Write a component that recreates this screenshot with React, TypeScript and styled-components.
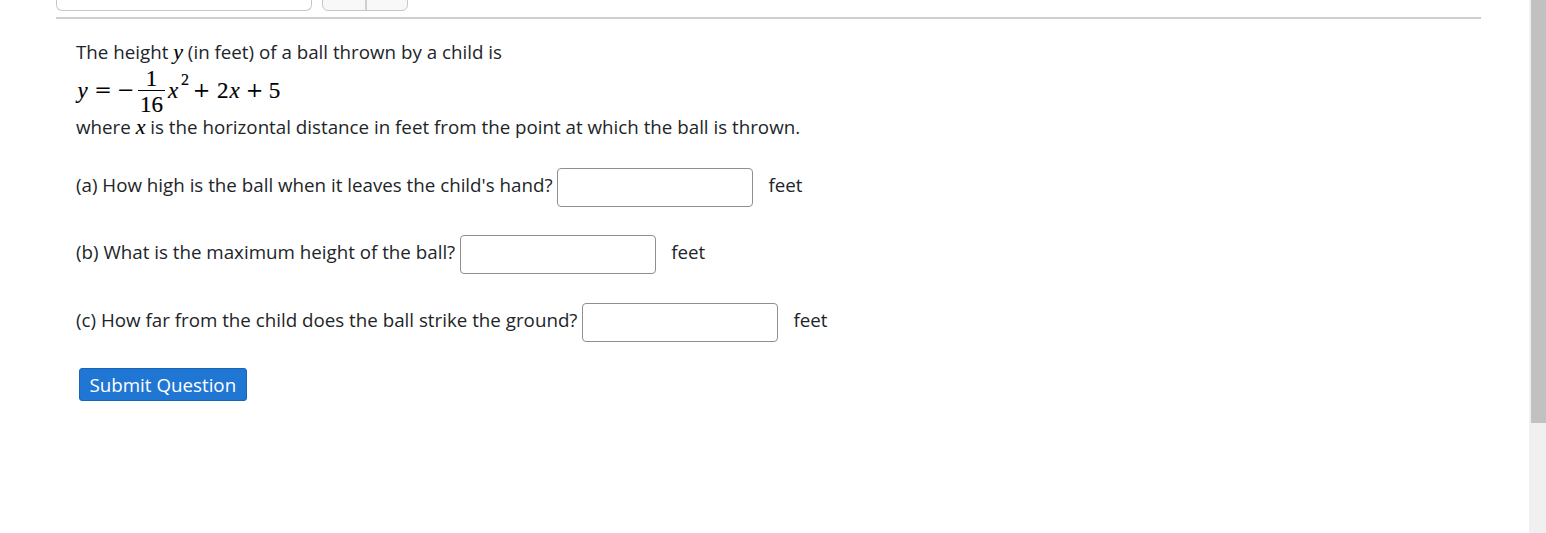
import React from "react";
import styled, { createGlobalStyle } from "styled-components";

const GlobalStyle = createGlobalStyle`
  html, body {
    margin: 0;
    padding: 0;
    background: #ffffff;
    overflow: hidden;
  }
  body {
    font-family: "Open Sans", "Noto Sans", sans-serif;
    font-size: 18.75px;
    color: #212529;
  }
`;

const Screen = styled.div`
  display: flex;
  width: 1546px;
  height: 533px;
  overflow: hidden;
`;

const Main = styled.div`
  flex: 1;
  padding: 0 48px 0 56px;
`;

const Toolbar = styled.div`
  display: flex;
  align-items: flex-end;
  gap: 10px;
  margin-top: -25px;
  height: 36px;
  padding-bottom: 6px;
  border-bottom: 2px solid #cfcfcf;
`;

const SearchBox = styled.div`
  width: 256px;
  height: 36px;
  box-sizing: border-box;
  border: 1px solid #c8c8c8;
  border-radius: 0 0 6px 6px;
  border-top: none;
`;

const ButtonGroup = styled.div`
  display: flex;
  height: 36px;
  box-sizing: border-box;
  border: 1px solid #c8c8c8;
  border-radius: 0 0 6px 6px;
  background: #f8f8f8;
  overflow: hidden;
`;

const GroupButton = styled.div<{ $w: number; $divider?: boolean }>`
  width: ${(p) => p.$w}px;
  height: 100%;
  border-left: ${(p) => (p.$divider ? "2px solid #cfcfcf" : "none")};
`;

const Content = styled.div`
  padding: 19px 20px 0 20px;
`;

const Line = styled.div`
  line-height: 28px;
`;

const MathVar = styled.span`
  font-family: "Liberation Serif", "DejaVu Serif", serif;
  font-style: italic;
  font-size: 22px;
  color: #000;
  -webkit-text-stroke: 0.15px #000;
`;

/* display equation: items hang from the top so each one can sit on its own offset */
const Display = styled.div`
  display: flex;
  align-items: flex-start;
  height: 47px;
  font-family: "Liberation Serif", "DejaVu Serif", serif;
  font-size: 23px;
  line-height: 23px;
  color: #000;
  -webkit-text-stroke: 0.2px #000;
`;

const Term = styled.span<{ $italic?: boolean; $w: number; $l?: number }>`
  display: inline-block;
  width: ${(p) => p.$w}px;
  margin: 13px 0 0 ${(p) => p.$l ?? 0}px;
  text-align: center;
  font-style: ${(p) => (p.$italic ? "italic" : "normal")};
`;

const Op = styled(Term)`
  font-family: "DejaVu Serif", "Liberation Serif", serif;
  font-size: 21px;
  -webkit-text-stroke: 0;
`;

const Fraction = styled.span`
  display: inline-flex;
  flex-direction: column;
  align-items: center;
  margin: 1px 2px 0 7px;
`;

const Numer = styled.span`
  align-self: stretch;
  text-align: center;
  padding: 0 2px;
  border-bottom: 1px solid #000;
`;

const Denom = styled.span`
  padding: 0 2px;
  margin-top: 2px;
`;

const Sup = styled.span`
  display: inline-block;
  width: 8px;
  font-size: 16px;
  line-height: 16px;
  margin: 6px 0 0 2px;
`;

const Question = styled.div<{ $top: number }>`
  display: flex;
  align-items: center;
  margin-top: ${(p) => p.$top}px;
  height: 38px;
`;

const Label = styled.span`
  padding-bottom: 5px;
`;

const Answer = styled.input`
  width: 196px;
  height: 39px;
  box-sizing: border-box;
  margin-left: 5px;
  border: 1px solid #8f8f8f;
  border-radius: 4px;
  background: #fff;
`;

const Unit = styled(Label)`
  margin-left: 15px;
`;

const SubmitButton = styled.button`
  margin: 27px 0 0 3px;
  height: 33px;
  padding: 0 9.5px;
  border: 1px solid #1a64b8;
  border-radius: 3px;
  background: #1f76d3;
  color: #ffffff;
  font-family: "Open Sans", "Noto Sans", sans-serif;
  font-size: 18.75px;
`;

const Scrollbar = styled.div`
  width: 17px;
  background: #f0f0f0;
  display: flex;
  justify-content: flex-end;
`;

const Thumb = styled.div`
  width: 15px;
  height: 423px;
  background: #c1c1c1;
`;

const questions = [
  { label: "(a) How high is the ball when it leaves the child's hand?", top: 27 },
  { label: "(b) What is the maximum height of the ball?", top: 29 },
  { label: "(c) How far from the child does the ball strike the ground?", top: 30 },
];

export default function App() {
  return (
    <Screen>
      <GlobalStyle />
      <Main>
        <Toolbar>
          <SearchBox />
          <ButtonGroup>
            <GroupButton $w={42} />
            <GroupButton $w={40} $divider />
          </ButtonGroup>
        </Toolbar>
        <Content>
          <Line>
            The height <MathVar>y</MathVar> (in feet) of a ball thrown by a child is
          </Line>
          <Display>
            <Term $italic $w={13}>y</Term>
            <Op $w={28}>=</Op>
            <Op $w={14}>−</Op>
            <Fraction>
              <Numer>1</Numer>
              <Denom>16</Denom>
            </Fraction>
            <Term $italic $w={12}>x</Term>
            <Sup>2</Sup>
            <Op $w={25}>+</Op>
            <Term $w={11.5} $l={3}>2</Term>
            <Term $italic $w={12}>x</Term>
            <Op $w={28}>+</Op>
            <Term $w={12}>5</Term>
          </Display>
          <Line>
            where <MathVar>x</MathVar> is the horizontal distance in feet from the point at which the
            ball is thrown.
          </Line>
          {questions.map((q) => (
            <Question key={q.label} $top={q.top}>
              <Label>{q.label}</Label>
              <Answer type="text" />
              <Unit>feet</Unit>
            </Question>
          ))}
          <SubmitButton>Submit Question</SubmitButton>
        </Content>
      </Main>
      <Scrollbar>
        <Thumb />
      </Scrollbar>
    </Screen>
  );
}
